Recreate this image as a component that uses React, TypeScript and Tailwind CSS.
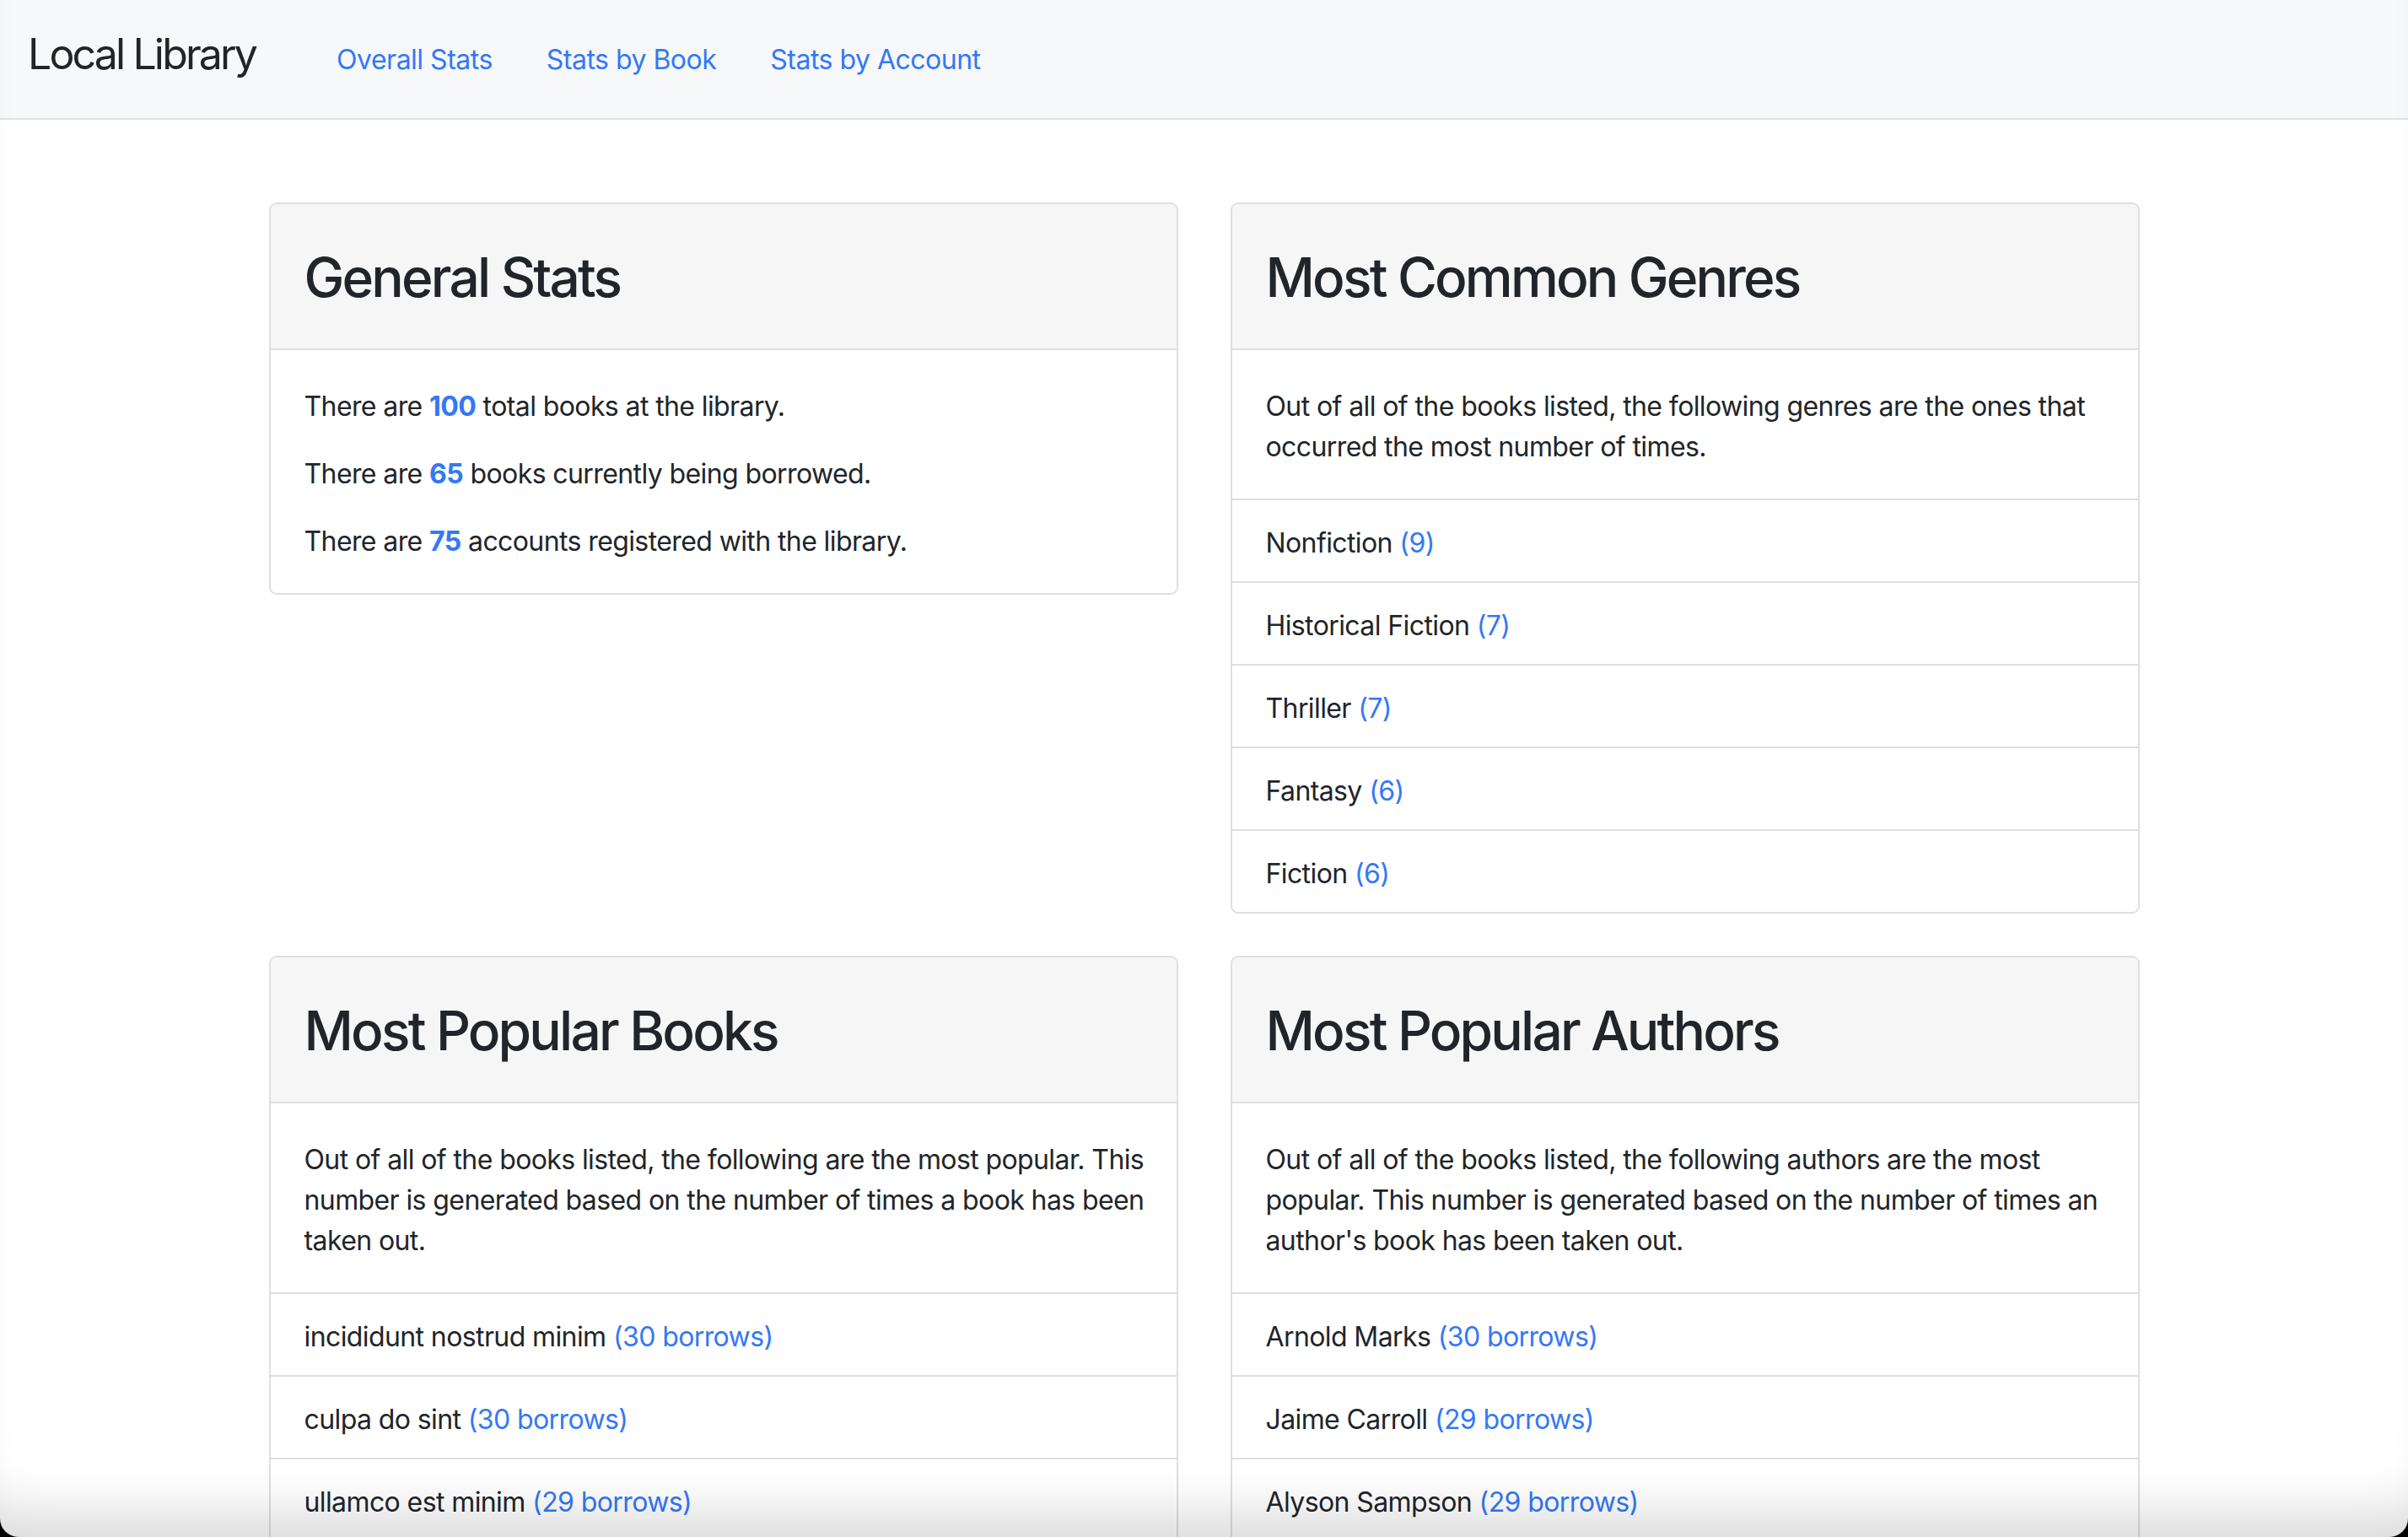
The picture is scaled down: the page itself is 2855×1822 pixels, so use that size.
import React from 'react';

const genres = [
  { name: 'Nonfiction', count: 9 },
  { name: 'Historical Fiction', count: 7 },
  { name: 'Thriller', count: 7 },
  { name: 'Fantasy', count: 6 },
  { name: 'Fiction', count: 6 },
];

const books = [
  { name: 'incididunt nostrud minim', count: 30 },
  { name: 'culpa do sint', count: 30 },
  { name: 'ullamco est minim', count: 29 },
  { name: 'sit eiusmod occaecat', count: 28 },
  { name: 'esse ea veniam non occaecat', count: 27 },
];

const authors = [
  { name: 'Arnold Marks', count: 30 },
  { name: 'Jaime Carroll', count: 29 },
  { name: 'Alyson Sampson', count: 29 },
  { name: 'Susanne Lawson', count: 28 },
  { name: 'Eva Ramirez', count: 27 },
];

const Card = ({ title, children }: { title: string; children: React.ReactNode }) => (
  <section className="overflow-hidden rounded-[9px] border-2 border-[#dfdfdf] bg-white">
    <div className="border-b-2 border-[#dfdfdf] bg-[#f6f6f6] px-[40px] pt-[48px] pb-[46px]">
      <h2 className="text-[64px] font-medium leading-[77px] tracking-[-2.8px]">{title}</h2>
    </div>
    {children}
  </section>
);

const Intro = ({ children }: { children: React.ReactNode }) => (
  <div className="pl-[40px] pr-[30px] pt-[43px] pb-[37px]">
    <p>{children}</p>
  </div>
);

const Item = ({ name, extra }: { name: string; extra: string }) => (
  <li className="border-t-2 border-[#dfdfdf] px-[40px] pt-[27px] pb-[21px]">
    {name} <span className="text-[#3478f6]">{extra}</span>
  </li>
);

export default function App() {
  return (
    <div
      className="relative h-[1822px] overflow-hidden bg-white text-[32px] leading-[48px] tracking-[-0.6px] text-[#212529]"
      style={{ fontFamily: 'Inter, "Noto Sans", sans-serif' }}
    >
      <nav className="flex h-[142px] items-center border-b-2 border-[#e0e1e5] bg-[#f7f8fa] pl-[33px]">
        <a className="mb-[12px] text-[50px] leading-[60px] tracking-[-2.85px]">Local Library</a>
        <div className="ml-[96px] mt-[2px] flex gap-[64px] tracking-[-0.5px] text-[#3478f6]">
          <a>Overall Stats</a>
          <a>Stats by Book</a>
          <a>Stats by Account</a>
        </div>
      </nav>

      <main className="mx-auto mt-[98px] grid w-[2218px] grid-cols-2 items-start gap-x-[62px] gap-y-[50px]">
        <Card title="General Stats">
          <div className="space-y-[32px] px-[40px] pt-[43px] pb-[37px]">
            <p>
              There are <strong className="font-bold text-[#3478f6]">100</strong> total books at the library.
            </p>
            <p>
              There are <strong className="font-bold text-[#3478f6]">65</strong> books currently being borrowed.
            </p>
            <p>
              There are <strong className="font-bold text-[#3478f6]">75</strong> accounts registered with the library.
            </p>
          </div>
        </Card>

        <Card title="Most Common Genres">
          <Intro>
            Out of all of the books listed, the following genres are the ones that occurred the most number of
            times.
          </Intro>
          <ul>
            {genres.map((g) => (
              <Item key={g.name} name={g.name} extra={`(${g.count})`} />
            ))}
          </ul>
        </Card>

        <Card title="Most Popular Books">
          <Intro>
            Out of all of the books listed, the following are the most popular. This number is generated based on
            the number of times a book has been taken out.
          </Intro>
          <ul>
            {books.map((b) => (
              <Item key={b.name} name={b.name} extra={`(${b.count} borrows)`} />
            ))}
          </ul>
        </Card>

        <Card title="Most Popular Authors">
          <Intro>
            Out of all of the books listed, the following authors are the most popular. This number is generated
            based on the number of times an author's book has been taken out.
          </Intro>
          <ul>
            {authors.map((a) => (
              <Item key={a.name} name={a.name} extra={`(${a.count} borrows)`} />
            ))}
          </ul>
        </Card>
      </main>

      {/* window edge: bottom shade and rounded corners */}
      <div className="pointer-events-none absolute inset-0 rounded-b-[22px] shadow-[0_0_0_80px_#000,inset_0_-70px_60px_-40px_rgba(0,0,0,0.14)]" />
    </div>
  );
}
